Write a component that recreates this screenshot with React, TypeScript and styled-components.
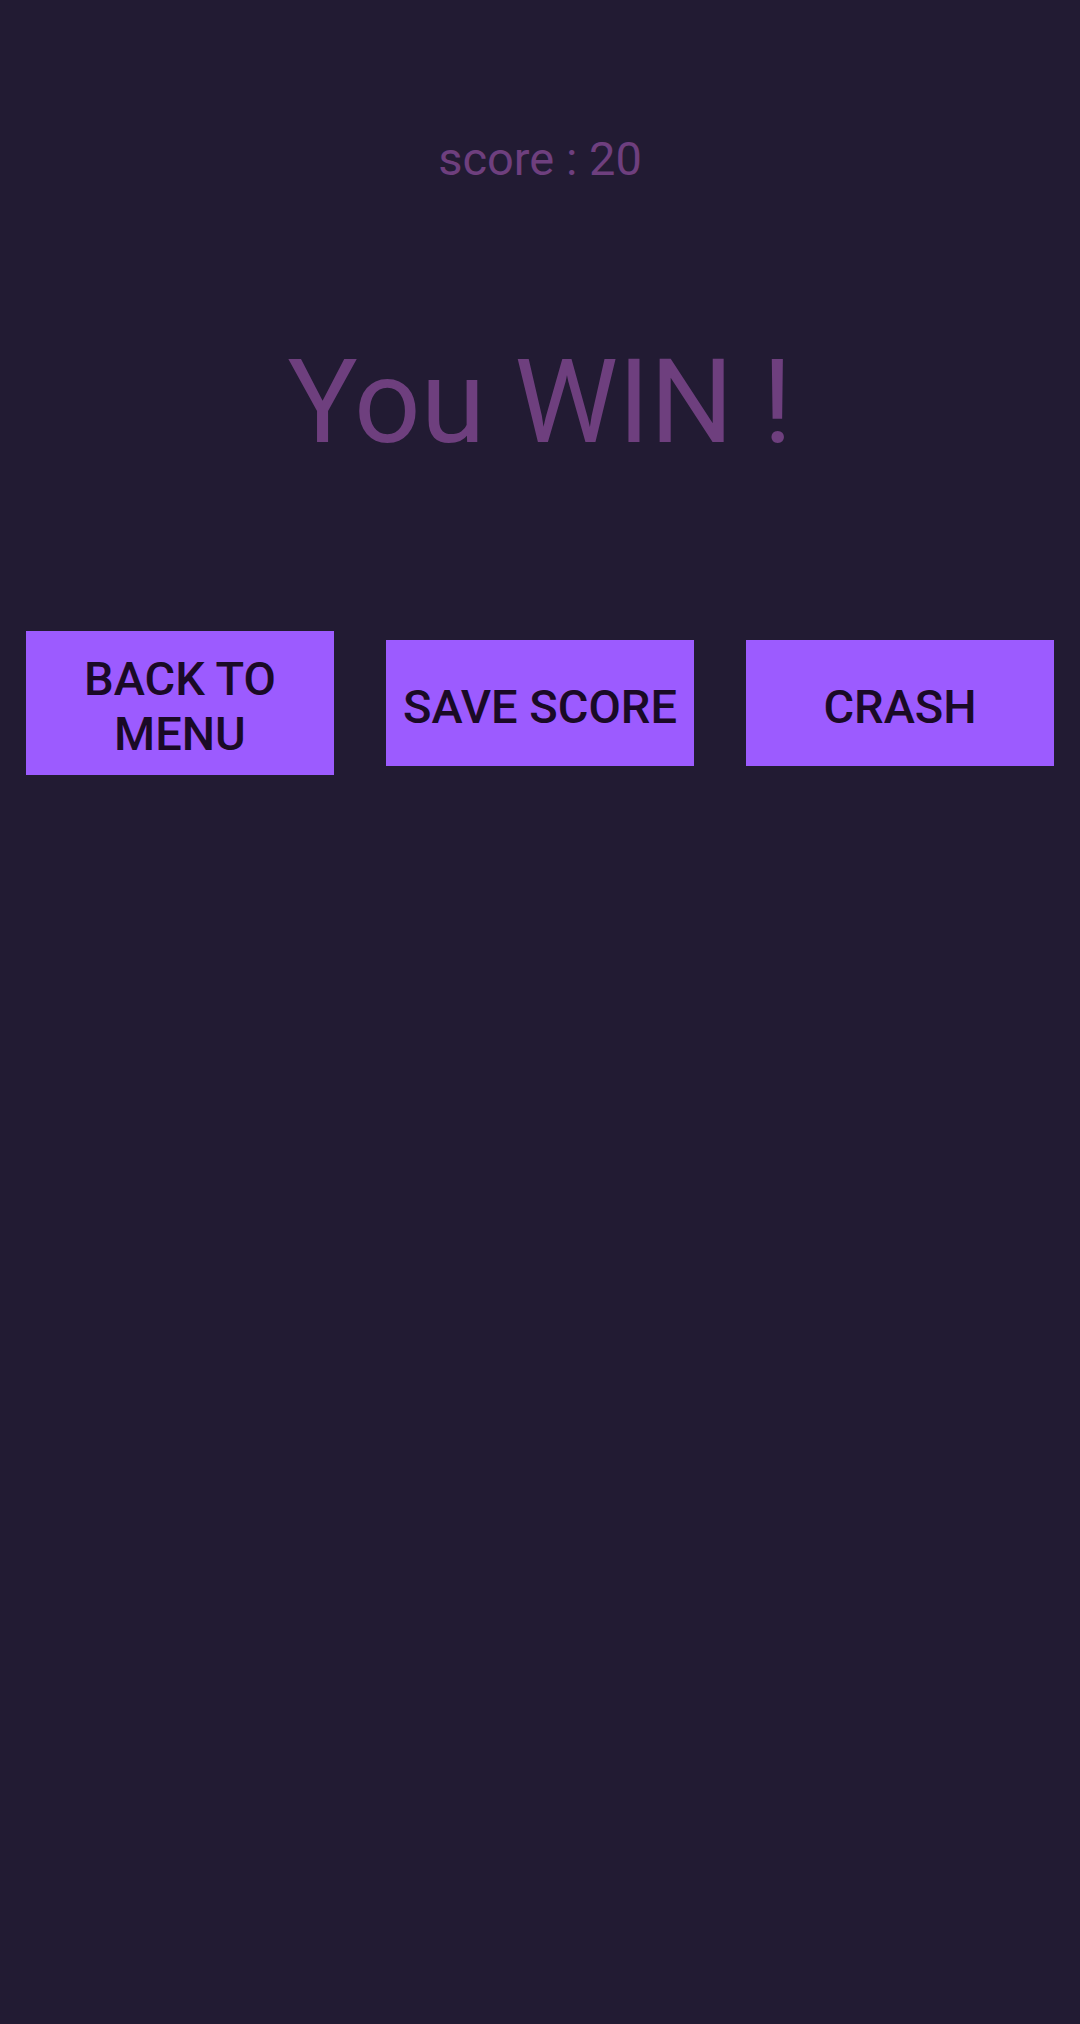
import React from "react";
import styled, { createGlobalStyle } from "styled-components";

const GlobalStyle = createGlobalStyle`
  html, body {
    margin: 0;
    padding: 0;
    background: #221b33;
  }
  body {
    font-family: Roboto, "Liberation Sans", sans-serif;
  }
`;

const Screen = styled.div`
  min-height: 2024px;
  background: #221b33;
  display: flex;
  flex-direction: column;
  align-items: center;
  padding-top: 131px;
  box-sizing: border-box;
`;

const Score = styled.div`
  font-size: 47px;
  font-weight: 400;
  color: #6e3f7e;
  line-height: normal;
`;

const Title = styled.h1`
  margin: 147px 0 0;
  font-size: 117px;
  font-weight: 400;
  color: #6e3f7e;
  line-height: normal;
`;

const ButtonRow = styled.div`
  margin-top: 160px;
  align-self: stretch;
  display: flex;
  align-items: center;
  gap: 52px;
  padding: 0 26px;
`;

const ActionButton = styled.button`
  flex: 0 0 308px;
  width: 308px;
  min-height: 126px;
  padding: 20px 12px 14px;
  box-sizing: border-box;
  border: none;
  border-radius: 0;
  background: #9c5bff;
  color: #1a0a26;
  font-family: Roboto, "Liberation Sans", sans-serif;
  font-size: 47px;
  font-weight: 500;
  line-height: 55px;
  text-transform: uppercase;
  text-align: center;
  cursor: pointer;
`;

export default function App() {
  return (
    <>
      <GlobalStyle />
      <Screen>
        <Score>score : 20</Score>
        <Title>You WIN !</Title>
        <ButtonRow>
          <ActionButton>Back to menu</ActionButton>
          <ActionButton>Save score</ActionButton>
          <ActionButton>Crash</ActionButton>
        </ButtonRow>
      </Screen>
    </>
  );
}
